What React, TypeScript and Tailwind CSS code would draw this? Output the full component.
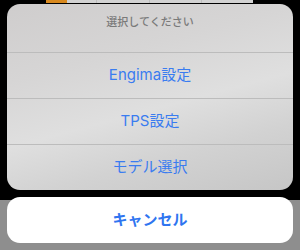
const font = { fontFamily: 'Inter, "Noto Sans CJK JP", "Noto Sans", sans-serif' };

const options = ["Engima設定", "TPS設定", "モデル選択"];

export default function App() {
  return (
    <div
      className="w-[300px] h-[250px] overflow-hidden bg-[linear-gradient(to_bottom,#000_200px,#8e8e8e_200px)]"
      style={font}
    >
      {/* tab bar peeking behind the sheet */}
      <div className="flex h-[3px]">
        <div className="w-[46px]" />
        <div className="w-[21px] bg-[#d8891f]" />
        <div className="w-[30px] bg-[#d2d2d2] border-r border-[#bdbdbd]" />
        <div className="w-[53px] bg-[#d2d2d2] border-r border-[#bdbdbd]" />
        <div className="w-[52px] bg-[#d2d2d2] border-r border-[#bdbdbd]" />
        <div className="w-[51px] bg-[#d2d2d2]" />
      </div>

      {/* action sheet */}
      <div className="mx-[7px] mt-[1px] rounded-[13px] overflow-hidden bg-[linear-gradient(165deg,#cfcdcd_0%,#d6d5d5_30%,#dfdfdf_55%,#d2d2d2_75%,#c6c6c6_100%)]">
        <div className="h-[48px] flex justify-center pt-[11px]">
          <span className="text-[11px] leading-[14px] font-medium text-[#7a7a7a]">
            選択してください
          </span>
        </div>
        {options.map((label) => (
          <div
            key={label}
            className="h-[46px] border-t border-[#bcbcbc] flex items-center justify-center"
          >
            <span className="text-[15px] text-[#3a7cf0]">{label}</span>
          </div>
        ))}
      </div>

      {/* cancel */}
      <div className="mx-[7px] mt-[7px] h-[46px] rounded-[13px] bg-white flex items-center justify-center">
        <span className="text-[15px] font-bold text-[#2f75f0]">キャンセル</span>
      </div>
    </div>
  );
}
